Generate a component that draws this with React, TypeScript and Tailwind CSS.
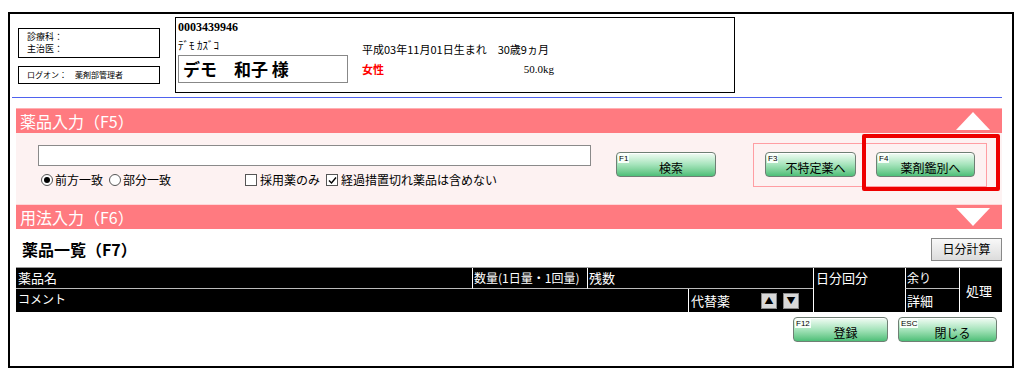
import React from "react";

const jp = "font-['Noto_Sans_CJK_JP','Noto_Sans',sans-serif]";

interface FKeyButtonProps {
  fkey: string;
  label: string;
  className?: string;
}

const FKeyButton: React.FC<FKeyButtonProps> = ({ fkey, label, className = "" }) => (
  <div
    className={`relative h-[25px] rounded-[4px] border border-[#6f7f74] bg-gradient-to-b from-[#f2fcf5] via-[#a6e4bc] to-[#4cbf78] shadow-[inset_0_1px_0_#ffffff] ${className}`}
  >
    <span className="absolute left-[1px] top-[1px] bg-[#f7fff9] px-[1px] text-[8px] leading-[9px] text-black font-['Liberation_Sans',sans-serif]">
      {fkey}
    </span>
    <span className="absolute inset-x-0 bottom-[1px] pl-[10px] text-center text-[12px] leading-[15px] text-black">
      {label}
    </span>
  </div>
);

const Triangle: React.FC<{ up?: boolean }> = ({ up }) => (
  <svg width="34" height="18" viewBox="0 0 34 18" className="mr-[12px]">
    {up ? <polygon points="17,0 34,18 0,18" fill="#ffffff" /> : <polygon points="0,0 34,0 17,18" fill="#ffffff" />}
  </svg>
);

const Radio: React.FC<{ checked?: boolean; label: string }> = ({ checked, label }) => (
  <label className="flex items-center gap-[2px]">
    <span className="flex h-[12px] w-[12px] items-center justify-center rounded-full border border-[#555] bg-white">
      {checked && <span className="h-[6px] w-[6px] rounded-full bg-black" />}
    </span>
    <span>{label}</span>
  </label>
);

const Check: React.FC<{ checked?: boolean; label: string }> = ({ checked, label }) => (
  <label className="flex items-center gap-[3px]">
    <span className="flex h-[12px] w-[12px] items-center justify-center border border-[#555] bg-white">
      {checked && (
        <svg width="9" height="9" viewBox="0 0 9 9">
          <path d="M1 4.5 L3.5 7 L8 1.5" stroke="#000" strokeWidth="1.4" fill="none" />
        </svg>
      )}
    </span>
    <span>{label}</span>
  </label>
);

const App: React.FC = () => {
  return (
    <div className={`h-[382px] w-[1022px] bg-white pl-[8px] pt-[12px] ${jp}`}>
      <div className="h-[356px] w-[1006px] border-2 border-black bg-white">
        {/* Header */}
        <div className="flex h-[83px] items-start pl-[8px]">
          <div className="mt-[14px] flex w-[142px] flex-col gap-[8px]">
            <div className="h-[30px] border border-black px-[8px] pt-[2px] text-[9px] leading-[12px]">
              <div>診療科：</div>
              <div>主治医：</div>
            </div>
            <div className="h-[18px] border border-black px-[8px] text-[8px] leading-[16px]">
              ログオン：　薬剤部管理者
            </div>
          </div>
          <div className="ml-[15px] mt-[3px] flex h-[76px] w-[560px] border border-black px-[2px]">
            <div className="flex w-[184px] flex-col">
              <div className="mt-[1px] text-[12px] font-bold leading-[16px] font-['Liberation_Serif',serif]">0003439946</div>
              <div className="mt-[3px] text-[11px] leading-[14px]">ﾃﾞﾓ ｶｽﾞｺ</div>
              <div className="mt-[3px] flex h-[28px] w-[170px] items-center border border-[#888] px-[4px] text-[17px] font-bold leading-[20px]">
                デモ　和子 様
              </div>
            </div>
            <div className="flex w-[192px] flex-col pt-[21px] text-[11px] leading-[20px]">
              <div className="whitespace-nowrap">平成03年11月01日生まれ　30歳9ヵ月</div>
              <div className="flex justify-between">
                <span className="font-bold text-[#ff0000]">女性</span>
                <span className="font-['Liberation_Serif',serif]">50.0kg</span>
              </div>
            </div>
          </div>
        </div>
        <div className="ml-[2px] mr-[10px] h-px bg-[#4f62ee]" />

        {/* 薬品入力 */}
        <div className="ml-[6px] mr-[10px] mt-[10px]">
          <div className="flex h-[25px] items-center justify-between border-t border-[#ffb0b3] bg-[#ff7a80] pl-[4px]">
            <span className="text-[16px] leading-[20px] text-white">薬品入力（F5）</span>
            <Triangle up />
          </div>
          <div className="relative flex h-[72px] border-b border-[#ffd6d8] bg-[#fdf2f2] text-[12px] leading-[16px]">
            <div className="flex flex-col pl-[22px] pt-[12px]">
              <div className="h-[21px] w-[553px] border border-[#8a8a8a] bg-white" />
              <div className="mt-[6px] flex items-center">
                <div className="flex w-[207px] gap-[6px] pl-[3px]">
                  <Radio checked label="前方一致" />
                  <Radio label="部分一致" />
                </div>
                <div className="flex gap-[6px]">
                  <Check label="採用薬のみ" />
                  <Check checked label="経過措置切れ薬品は含めない" />
                </div>
              </div>
            </div>
            <FKeyButton fkey="F1" label="検索" className="ml-[25px] mt-[19px] w-[100px]" />
            <div className="ml-[37px] mt-[10px] flex h-[44px] w-[234px] gap-[20px] border border-[#ff9ea3] pl-[11px] pt-[8px]">
              <FKeyButton fkey="F3" label="不特定薬へ" className="w-[91px]" />
              <FKeyButton fkey="F4" label="薬剤鑑別へ" className="w-[99px]" />
            </div>
            <div className="absolute left-[846px] top-[1px] h-[57px] w-[138px] rounded-[2px] border-[4px] border-[#ee0000]" />
          </div>
          <div className="flex h-[24px] items-center justify-between bg-[#ff7a80] pl-[4px]">
            <span className="text-[16px] leading-[20px] text-white">用法入力（F6）</span>
            <Triangle />
          </div>
        </div>

        {/* 薬品一覧 */}
        <div className="ml-[6px] mr-[10px]">
          <div className="flex h-[38px] items-center justify-between pl-[6px]">
            <span className="mt-[2px] text-[16px] font-bold leading-[20px]">薬品一覧（F7）</span>
            <div className="mt-[2px] flex h-[23px] w-[71px] items-center justify-center border border-[#888] bg-gradient-to-b from-[#f8f8f8] to-[#dcdcdc] text-[12px]">
              日分計算
            </div>
          </div>
          <div className="grid h-[45px] grid-cols-[456px_115px_101px_125px_92px_54px_1fr] grid-rows-[21px_24px] border-t border-[#999] bg-black text-[12px] leading-[16px] text-white">
            <div className="border-b border-[#bbb] pl-[2px] pt-[2px] text-[13px]">薬品名</div>
            <div className="border-b border-l border-[#bbb] border-l-white pl-[1px] pt-[2px] whitespace-nowrap">数量(1日量・1回量)</div>
            <div className="col-span-2 border-b border-l border-[#bbb] border-l-white pl-[1px] pt-[2px] text-[13px]">残数</div>
            <div className="row-span-2 border-l border-white pl-[2px] pt-[2px] text-[13px]">日分回分</div>
            <div className="border-b border-l border-[#bbb] border-l-white pl-[1px] pt-[2px]">余り</div>
            <div className="row-span-2 flex items-center border-l border-white pl-[6px] text-[13px]">処理</div>
            <div className="col-span-3 pl-[2px] pt-[2px]">コメント</div>
            <div className="flex items-center border-l border-white pl-[2px]">
              <span className="w-[70px] text-[13px]">代替薬</span>
              <span className="flex h-[16px] w-[16px] items-center justify-center border border-[#888] bg-[#d8d8d8] text-[9px] text-black">▲</span>
              <span className="ml-[6px] flex h-[16px] w-[16px] items-center justify-center border border-[#888] bg-[#d8d8d8] text-[9px] text-black">▼</span>
            </div>
            <div className="flex items-center border-l border-white pl-[1px] text-[13px]">詳細</div>
          </div>
          <div className="mt-[5px] flex justify-end gap-[10px] pr-[5px]">
            <FKeyButton fkey="F12" label="登録" className="w-[95px]" />
            <FKeyButton fkey="ESC" label="閉じる" className="w-[99px]" />
          </div>
        </div>
      </div>
    </div>
  );
};

export default App;
